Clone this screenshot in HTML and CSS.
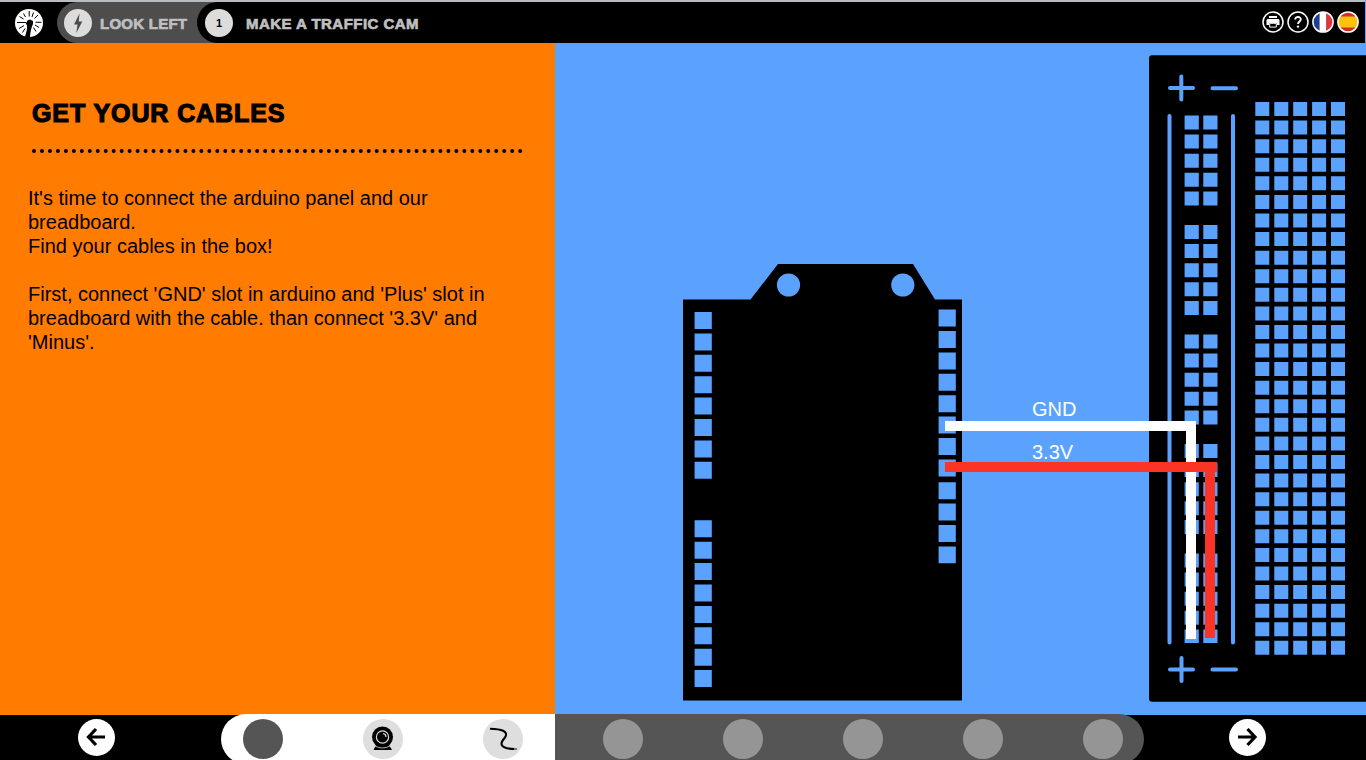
FILE: index.html
```html
<!DOCTYPE html>
<html lang="en">
<head>
<meta charset="utf-8">
<title>Make a traffic cam</title>
<link rel="stylesheet" href="styles.css">
</head>
<body>
<div class="page">
  <header class="topbar">
    <svg class="logo" viewBox="0 0 28 28"><circle cx="14" cy="14" r="14" fill="#fff"/><path d="M10 28C11.200 23 12.500 20 12 16.500L10.800 14.500 12.500 11.500 15 10.500 18 12 18 15C16.500 18 15.300 23 15 28Z" fill="#000"/><path d="M14.200 7.500V2M17 8 18.500 3.500M19.500 9.500 23 6M20.500 13.300H26.500M20 16 24 18.500M18.500 18.500 21 22.500M10.500 8 8.500 4.500M8.500 10 4.500 7.500M11 13.500H2M9 16.500 4 19.500M10 19.500 7.500 23.500" stroke="#000" stroke-width="1"/></svg>
    <div class="course">
      <svg class="badge" viewBox="0 0 28 28"><circle cx="14" cy="14" r="14" fill="#dcdcdc"/><path d="M15.500 4.500 10 15.500H13.500L12.300 24 18.300 12.500H14.700Z" fill="#4b4b4b"/></svg>
      <span class="crumb crumb-course">LOOK LEFT</span>
    </div>
    <div class="lesson"><span class="number">1</span><span class="crumb crumb-lesson">MAKE A TRAFFIC CAM</span></div>
    <nav class="tools">
      <svg viewBox="0 0 22 22"><circle cx="11" cy="11" r="10" fill="#000" stroke="#fff" stroke-width="1.500"/><path d="M7 5h8v2H7zM5.500 8h11l1 1v5h-2.500v-2H7v2H4.500V9z" fill="#fff"/><path d="M7.700 12.300h6.600v3.800H7.700z" fill="#000" stroke="#fff"/></svg>
      <svg viewBox="0 0 22 22"><circle cx="11" cy="11" r="10" fill="#000" stroke="#fff" stroke-width="1.500"/><path d="M8.200 8.600C8.200 5 14 5.200 13.800 8.500 13.700 10.500 11 10.400 11 13" fill="none" stroke="#fff" stroke-width="1.900"/><circle cx="11" cy="15.600" r="1.200" fill="#fff"/></svg>
      <svg viewBox="0 0 22 22"><clipPath id="disc"><circle cx="11" cy="11" r="10"/></clipPath><g clip-path="url(#disc)"><path d="M0 0h7.500v22H0z" fill="#1d3f9c"/><path d="M7.500 0h7v22h-7z" fill="#fff"/><path d="M14.500 0H22v22h-7.500z" fill="#e5323c"/></g><circle cx="11" cy="11" r="10.100" fill="none" stroke="#fff" stroke-width="1.500"/></svg>
      <svg viewBox="0 0 22 22"><g clip-path="url(#disc)"><path d="M0 0h22v22H0z" fill="#d32f28"/><path d="M0 5.500h22v11H0z" fill="#fdc30c"/></g><circle cx="11" cy="11" r="10.100" fill="none" stroke="#fff" stroke-width="1.500"/></svg>
    </nav>
  </header>
  <main class="content">
    <section class="instructions">
      <h1 class="title">GET YOUR CABLES</h1>
      <svg class="dots" viewBox="0 0 494 6"><path d="M2 3H492" stroke="#000" stroke-width="4" stroke-linecap="round" stroke-dasharray="0 7.970"/></svg>
      <p class="copy">It's time to connect the arduino panel and our<br>breadboard.<br>Find your cables in the box!</p>
      <p class="copy">First, connect 'GND' slot in arduino and 'Plus' slot in<br>breadboard with the cable. than connect '3.3V' and<br>'Minus'.</p>
    </section>
    <svg class="diagram" viewBox="555 43 811 671">
      <!-- Arduino board -->
      <path d="M683 299.500H750.500L778 264H913L935 299.500H962V700.500H683Z"/>
      <g class="hole"><circle cx="788.500" cy="285" r="11.600"/><circle cx="902.800" cy="285" r="11.600"/></g>
      <g class="pins">
        <path d="M703.200 312V479"/>
        <path d="M703.200 520.300V687.300"/>
        <path d="M947.200 309.600V476.400"/>
        <path d="M947.200 482.200V563.300"/>
      </g>
      <!-- Breadboard -->
      <rect x="1149" y="55.300" width="230" height="646.500" rx="3"/>
      <g class="marks">
        <path d="M1170 88H1193M1181.300 76.500V99.500M1212.500 88.200H1236M1170 669.500H1193M1181.500 658V681M1212.500 669.500H1236M1169.500 116V642.500M1233 116V642.500"/>
      </g>
      <g class="power">
        <path d="M1191.700 115.500V643"/><path d="M1210.400 115.500V643"/>
      </g>
      <g class="grid">
        <path d="M1262.300 102V655"/><path d="M1281.300 102V655"/><path d="M1300.200 102V655"/><path d="M1319.100 102V655"/><path d="M1338 102V655"/>
      </g>
      <!-- Cables -->
      <path d="M945 421H1196V639H1186V431H945Z" fill="#fff"/>
      <path d="M945 462H1217V472H1215V638H1205V472H945Z" fill="#fb3426"/>
      <text class="label" x="1032" y="416">GND</text>
      <text class="label" x="1032" y="459">3.3V</text>
    </svg>
  </main>
  <footer class="steps">
    <svg class="arrow prev" viewBox="0 0 37 37"><circle cx="18.500" cy="18.500" r="18.500" fill="#fff"/><path d="M27 18H11M18 10 10.500 18 18 26" fill="none" stroke="#000" stroke-width="3.200"/></svg>
    <div class="track">
      <div class="done">
        <i class="step current"></i>
        <svg class="icon" viewBox="0 0 40 40"><circle cx="20" cy="20" r="20" fill="#dedede"/><path d="M13 26h13l3 5H10.500z"/><circle cx="19.500" cy="18" r="10.500"/><circle cx="19.500" cy="18" r="6.100" fill="none" stroke="#dedede" stroke-width="1.200"/><path d="M20 14.500q3 .5 3 3.500" fill="none" stroke="#dedede" stroke-width="1.200"/><path d="M12 27q7.500 4 15 0" fill="none" stroke="#dedede" stroke-width=".8"/></svg>
        <svg class="icon" viewBox="0 0 40 40"><circle cx="20" cy="20" r="20" fill="#dedede"/><path d="M7 9.700C18 10 26 12 22 18.500 18 23 16 27 24 29.200 27 30 30 30 32 30" fill="none" stroke="#000" stroke-width="2.100"/><path d="M31 30h3" stroke="#777" stroke-width="2"/></svg>
      </div>
      <div class="todo"><i class="step"></i><i class="step"></i><i class="step"></i><i class="step"></i><i class="step"></i></div>
    </div>
    <svg class="arrow next" viewBox="0 0 37 37"><circle cx="18.500" cy="18.500" r="18.500" fill="#fff"/><path d="M9 18H26M18.500 10 26 18 18.500 26" fill="none" stroke="#000" stroke-width="3.200"/></svg>
  </footer>
</div>
</body>
</html>
```
FILE: styles.css
```css
* { box-sizing: border-box; }
body { margin: 0; font-family: "Liberation Sans", Arial, sans-serif; }
.page { width: 1366px; height: 760px; display: grid; grid-template-rows: 43px 671px 46px; overflow: hidden; background: #5ba2ff; }
.topbar { display: flex; align-items: stretch; background: #000; border-top: 2px solid #b9bcbf; width: 1365px; }
.logo { width: 28px; height: 28px; margin: 7px 14px 0 15px; }
.course { display: flex; align-items: flex-start; width: 160px; margin-right: -20px; padding: 7px 0 0 7px; background: #4d4d4d; border-radius: 21px 0 0 21px; }
.badge { width: 28px; height: 28px; }
.crumb { font-weight: bold; font-size: 15px; line-height: 30px; color: #bfbfbf; white-space: nowrap; -webkit-text-stroke: .7px #bfbfbf; }
.crumb-course { margin-left: 8px; letter-spacing: .25px; }
.lesson { display: flex; align-items: flex-start; padding: 7px 0 0 8px; background: #000; border-radius: 21px 0 0 21px; }
.number { width: 28px; height: 28px; border-radius: 50%; background: #dcdcdc; font-size: 11px; font-weight: bold; line-height: 29px; text-align: center; }
.crumb-lesson { margin-left: 13px; letter-spacing: .46px; }
.tools { display: flex; gap: 3px; margin: 9px 6px 0 auto; }
.tools svg { width: 22px; height: 22px; }
.content { display: grid; grid-template-columns: 555px 811px; }
.instructions { background: #ff7c00; padding: 53px 28px 0; }
.title { margin: 0 0 0 4px; font-size: 25px; line-height: 34px; letter-spacing: .9px; -webkit-text-stroke: 1.2px #000; white-space: nowrap; }
.dots { display: block; width: 494px; height: 6px; margin: 18px 0 32px 4px; }
.copy { margin: 0 0 24px; font-size: 20px; line-height: 24px; white-space: nowrap; }
.diagram { width: 811px; height: 671px; display: block; }
.hole { fill: #5ba2ff; }
.pins, .power, .grid, .marks { stroke: #5ba2ff; fill: none; }
.pins { stroke-width: 17.2px; stroke-dasharray: 17 4.4; }
.power { stroke-width: 14.2px; stroke-dasharray: 14 5.1 14 5.1 14 5.1 14 4.700 14 19.500; }
.grid { stroke-width: 14px; stroke-dasharray: 14 4.580; }
.marks { stroke-width: 4px; stroke-linecap: round; }
.label { fill: #fff; font-size: 20px; }
.steps { display: flex; background: linear-gradient(90deg, #ff7c00 555px, #5ba2ff 555px) top / 100% 1px no-repeat #000; }
.arrow { width: 37px; height: 37px; margin-top: 5px; }
.prev { margin-left: 78px; margin-right: 106px; }
.next { margin-left: 85px; }
.track { display: flex; width: 923px; height: 50px; }
.done, .todo { display: flex; gap: 80px; padding-top: 5px; height: 50px; }
.done { width: 334px; padding-left: 22px; background: #fff; border-radius: 25px 0 0 25px; }
.todo { width: 589px; padding-left: 48px; background: #555; border-radius: 0 25px 25px 0; }
.step { width: 40px; height: 40px; flex: none; border-radius: 50%; background: #959595; }
.icon { width: 40px; height: 40px; flex: none; }
.current { background: #555; }
```
